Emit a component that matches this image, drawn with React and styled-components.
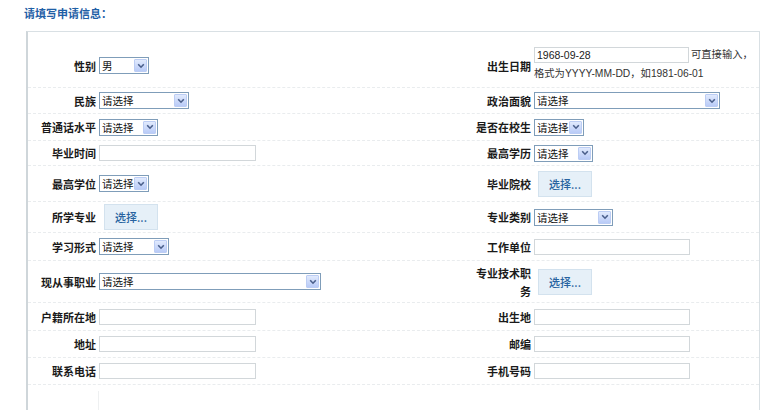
import React from 'react';
import styled, { createGlobalStyle } from 'styled-components';

const Global = createGlobalStyle`
  html, body { margin: 0; padding: 0; background: #fff; }
  body {
    font-family: "Liberation Sans", "Noto Sans CJK SC", sans-serif;
    font-size: 11px;
    color: #222;
  }
`;

const Page = styled.div`
  width: 780px;
  height: 410px;
  overflow: hidden;
  box-sizing: border-box;
  padding: 7px 20px 0 24px;
`;

const Title = styled.div`
  font-family: "Noto Sans CJK SC", sans-serif;
  font-size: 11px;
  font-weight: bold;
  line-height: 13px;
  color: #1f60a6;
`;

const Panel = styled.div`
  margin: 11px 0 0 2px;
  width: 734px;
  height: 420px;
  box-sizing: border-box;
  border-top: 1px solid #d9e0e4;
  border-left: 2px solid #cfd6da;
  border-right: 1px solid #d9e0e4;
  padding-top: 12px;
`;

const Row = styled.div`
  display: grid;
  grid-template-columns: 71px 373px 62px 1fr;
  align-items: center;
  height: ${p => p.$h}px;
  box-sizing: border-box;
  border-bottom: 1px dashed #e9ecee;
`;

const Label = styled.div`
  font-family: "Noto Sans CJK SC", sans-serif;
  font-size: 11px;
  font-weight: bold;
  line-height: 18px;
  color: #1a1a1a;
  text-align: right;
  padding-right: 3px;
`;

const Field = styled.div`
  display: flex;
  align-items: center;
`;

const SelectBox = styled.div`
  width: ${p => p.$w}px;
  height: 17px;
  box-sizing: border-box;
  border: 1px solid #7f9db9;
  background: #fff;
  display: flex;
  align-items: center;
  justify-content: space-between;
  padding-left: 2px;
  font-family: "Noto Sans CJK SC", sans-serif;
  font-size: 10.5px;
  line-height: 13px;
  color: #111;
  white-space: nowrap;
  overflow: hidden;
`;

const SelectText = styled.span`
  overflow: hidden;
  white-space: nowrap;
`;

const Arrow = styled.span`
  flex: 0 0 auto;
  width: 13px;
  height: 13px;
  margin-right: 1px;
  box-sizing: border-box;
  border: 1px solid #bccdf4;
  border-radius: 1px;
  background: linear-gradient(#e1eafd, #b9cbf7);
  display: flex;
  align-items: center;
  justify-content: center;
`;

const TextInput = styled.input`
  width: ${p => p.$w}px;
  height: 16px;
  box-sizing: border-box;
  border: 1px solid #d2d7da;
  border-radius: 0;
  padding: 0 2px;
  margin: 0;
  font-family: "Liberation Sans", sans-serif;
  font-size: 10.5px;
  color: #222;
  background: #fff;
  outline: none;
`;

const PickButton = styled.button`
  width: 54px;
  height: 26px;
  margin: 0 0 0 ${p => p.$ml || 5}px;
  padding: 0;
  box-sizing: border-box;
  border: 1px solid #d3e2ee;
  background: #e6f0f8;
  color: #2763a0;
  font-family: "Noto Sans CJK SC", sans-serif;
  font-size: 11px;
  font-weight: 500;
  cursor: pointer;
`;

const DateCell = styled.div`
  display: flex;
  flex-direction: column;
`;

const DateLine = styled.div`
  display: flex;
  align-items: flex-start;
  height: 16px;
`;

const Hint = styled.span`
  font-family: "Liberation Sans", "Noto Sans CJK SC", sans-serif;
  font-size: 10.3px;
  line-height: ${p => p.$lh || 14}px;
  color: #333;
  margin-left: ${p => p.$ml || 0}px;
  white-space: nowrap;
`;

const Footer = styled.div`
  display: grid;
  grid-template-columns: 71px 1fr;
  height: 40px;
  margin-top: 6px;
`;

const FooterCell = styled.div`
  border-right: 1px solid #eef0f1;
`;

const Chevron = () => (
  <svg width="8" height="6" viewBox="0 0 8 6">
    <polyline points="1.2,1.3 4,4.2 6.8,1.3" fill="none" stroke="#4a5f8a" strokeWidth="1.6" />
  </svg>
);

const Select = ({ w, text = '请选择' }) => (
  <SelectBox $w={w}>
    <SelectText>{text}</SelectText>
    <Arrow><Chevron /></Arrow>
  </SelectBox>
);

export default function App() {
  return (
    <Page>
      <Global />
      <Title>请填写申请信息：</Title>
      <Panel>
        <Row $h={44}>
          <Label>性别</Label>
          <Field><Select w={50} text="男" /></Field>
          <Label>出生日期</Label>
          <DateCell>
            <DateLine>
              <TextInput $w={155} defaultValue="1968-09-28" />
              <Hint $ml={2} $lh={15}>可直接输入，</Hint>
            </DateLine>
            <Hint $lh={22}>格式为YYYY-MM-DD，如1981-06-01</Hint>
          </DateCell>
        </Row>
        <Row $h={26}>
          <Label>民族</Label>
          <Field><Select w={90} /></Field>
          <Label>政治面貌</Label>
          <Field><Select w={186} /></Field>
        </Row>
        <Row $h={27}>
          <Label>普通话水平</Label>
          <Field><Select w={59} /></Field>
          <Label>是否在校生</Label>
          <Field><Select w={50} /></Field>
        </Row>
        <Row $h={25}>
          <Label>毕业时间</Label>
          <Field><TextInput $w={157} /></Field>
          <Label>最高学历</Label>
          <Field><Select w={59} /></Field>
        </Row>
        <Row $h={36}>
          <Label>最高学位</Label>
          <Field><Select w={50} /></Field>
          <Label>毕业院校</Label>
          <Field><PickButton $ml={4}>选择...</PickButton></Field>
        </Row>
        <Row $h={31}>
          <Label>所学专业</Label>
          <Field><PickButton $ml={5}>选择...</PickButton></Field>
          <Label>专业类别</Label>
          <Field><Select w={79} /></Field>
        </Row>
        <Row $h={28}>
          <Label>学习形式</Label>
          <Field><Select w={70} /></Field>
          <Label>工作单位</Label>
          <Field><TextInput $w={156} /></Field>
        </Row>
        <Row $h={42}>
          <Label>现从事职业</Label>
          <Field><Select w={222} /></Field>
          <Label>专业技术职务</Label>
          <Field><PickButton $ml={4}>选择...</PickButton></Field>
        </Row>
        <Row $h={28}>
          <Label>户籍所在地</Label>
          <Field><TextInput $w={157} /></Field>
          <Label>出生地</Label>
          <Field><TextInput $w={156} /></Field>
        </Row>
        <Row $h={27}>
          <Label>地址</Label>
          <Field><TextInput $w={157} /></Field>
          <Label>邮编</Label>
          <Field><TextInput $w={156} /></Field>
        </Row>
        <Row $h={27}>
          <Label>联系电话</Label>
          <Field><TextInput $w={157} /></Field>
          <Label>手机号码</Label>
          <Field><TextInput $w={156} /></Field>
        </Row>
        <Footer>
          <FooterCell />
          <div />
        </Footer>
      </Panel>
    </Page>
  );
}
